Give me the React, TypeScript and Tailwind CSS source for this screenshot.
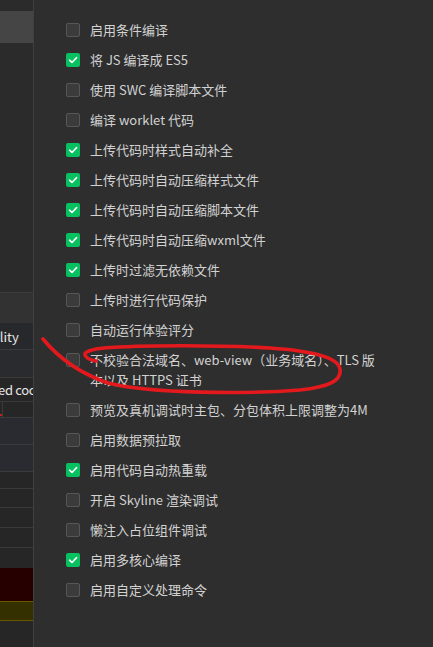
import React from "react";

const items: { label: string; checked: boolean }[] = [
  { label: "启用条件编译", checked: false },
  { label: "将 JS 编译成 ES5", checked: true },
  { label: "使用 SWC 编译脚本文件", checked: false },
  { label: "编译 worklet 代码", checked: false },
  { label: "上传代码时样式自动补全", checked: true },
  { label: "上传代码时自动压缩样式文件", checked: true },
  { label: "上传代码时自动压缩脚本文件", checked: true },
  { label: "上传代码时自动压缩wxml文件", checked: true },
  { label: "上传时过滤无依赖文件", checked: true },
  { label: "上传时进行代码保护", checked: false },
  { label: "自动运行体验评分", checked: false },
  { label: "不校验合法域名、web-view（业务域名）、TLS 版本以及 HTTPS 证书", checked: false },
  { label: "预览及真机调试时主包、分包体积上限调整为4M", checked: false },
  { label: "启用数据预拉取", checked: false },
  { label: "启用代码自动热重载", checked: true },
  { label: "开启 Skyline 渲染调试", checked: false },
  { label: "懒注入占位组件调试", checked: false },
  { label: "启用多核心编译", checked: true },
  { label: "启用自定义处理命令", checked: false },
];

function Box({ checked }: { checked: boolean }) {
  if (checked) {
    return (
      <div className="w-[14px] h-[14px] mt-[3px] shrink-0 rounded-[2px] bg-[#07c160] flex items-center justify-center">
        <svg width="10" height="10" viewBox="0 0 10 10" fill="none">
          <path d="M1.6 5.2 L4 7.5 L8.6 2.6" stroke="#fff" strokeWidth="1.6" strokeLinecap="round" strokeLinejoin="round" />
        </svg>
      </div>
    );
  }
  return <div className="w-[14px] h-[14px] mt-[3px] shrink-0 rounded-[2px] bg-[#3b3b3b] border border-[#575757]" />;
}

export default function App() {
  return (
    <div
      className="relative flex w-[433px] h-[647px] overflow-hidden"
      style={{ fontFamily: '"Noto Sans CJK SC", "Noto Sans", sans-serif' }}
    >
      {/* left panel */}
      <div className="w-[33px] shrink-0 flex flex-col bg-[#2b2b2b] overflow-hidden text-[13px] text-[#e6e6e6] leading-none">
        <div className="h-[11px]" />
        <div className="h-[32px] bg-[#454545]" />
        <div className="h-[250px] border-b border-[#3c3c3c]" />
        <div className="h-[30px] bg-[#323232]" />
        <div className="h-[27px] bg-[#27282c] border-b border-[#3a3a3a] flex items-center whitespace-nowrap">
          <span className="ml-[-25px]">Quality</span>
        </div>
        <div className="h-[28px] bg-[#2a2b2f] border-b border-[#3a3a3a]" />
        <div className="h-[24px] bg-[#262626] border-b border-[#3a3a3a] flex items-center whitespace-nowrap">
          <span className="ml-[-2px] tracking-[-0.3px]">ed cool</span>
        </div>
        <div className="h-[16px] bg-[#262626] border-b border-[#3a3a3a] flex relative">
          <div className="w-[2px]" />
          <div className="w-px bg-[#3a3a3a]" />
          <div className="absolute left-0 top-[12px] w-[2px] h-[2px] bg-[#c02020]" />
        </div>
        <div className="h-[27px] bg-[#2a2b30] border-b border-[#3a3a3a]" />
        <div className="h-[27px] bg-[#2a2b30] border-b border-[#3a3a3a]" />
        <div className="h-[17px] bg-[#262626] border-b border-[#3a3a3a]" />
        <div className="h-[19px] bg-[#262626] border-b border-[#3a3a3a]" />
        <div className="h-[20px] bg-[#262626] border-b border-[#3a3a3a]" />
        <div className="h-[20px] bg-[#262626] border-b border-[#3a3a3a]" />
        <div className="h-[20px] bg-[#262626]" />
        <div className="h-[34px] bg-[#260000] border-b border-[#6b5600]" />
        <div className="h-[19px] bg-[#353000] border-b border-[#6b5600]" />
        <div className="flex-1 bg-[#262626]" />
      </div>
      <div className="w-px shrink-0 bg-[#404040]" />
      {/* right panel */}
      <div className="flex-1 bg-[#2e2e2e] pt-[15px] pl-[32px]">
        {items.map((it, i) => (
          <div key={i} className="flex items-start gap-[10px] py-[5px]">
            <Box checked={it.checked} />
            <div className="w-[296px] text-[13px] leading-[20px] text-[#d2d2d2]">{it.label}</div>
          </div>
        ))}
      </div>
      {/* red annotation */}
      <svg className="absolute left-0 top-0 pointer-events-none" width="433" height="647" viewBox="0 0 433 647" fill="none">
        <path
          d="M43 339 C57 356 76 372 108 383 C150 394 250 394 300 390 C328 387 342 381 340 369 C338 357 312 351 270 348 C220 345 140 345 104 348 C92 349 84 352 85 355 C86 358 90 360 96 361"
          stroke="#e3191d"
          strokeWidth="3.6"
          strokeLinecap="round"
          strokeLinejoin="round"
        />
      </svg>
    </div>
  );
}
